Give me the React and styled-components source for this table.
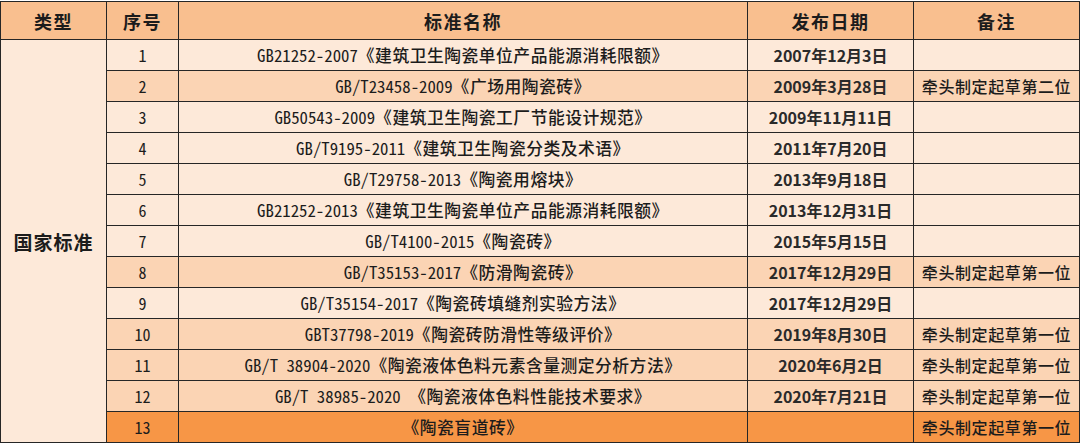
import React from 'react';
import styled, { createGlobalStyle } from 'styled-components';

const GlobalStyle = createGlobalStyle`
  html, body {
    margin: 0;
    padding: 0;
    background: #ffffff;
  }
`;

const tones = {
  header: '#f9bf8f',
  light: '#fde9d9',
  mid: '#fbd4b4',
  strong: '#f79646',
};

const Table = styled.table`
  width: 1079px;
  margin-top: 1px;
  border-collapse: collapse;
  table-layout: fixed;
  font-family: 'Noto Sans CJK SC', sans-serif;
  color: #1c1c1c;
`;

const HeadCell = styled.th`
  height: 37px;
  padding: 0;
  background: ${tones.header};
  border: 1px solid #262626;
  font-size: 18px;
  font-weight: 700;
  letter-spacing: 1.5px;
  text-align: center;
  vertical-align: middle;
`;

const Cell = styled.td`
  height: 30px;
  padding: 0;
  background: ${(p) => tones[p.$tone]};
  border: 1px solid #262626;
  text-align: center;
  vertical-align: middle;
  white-space: nowrap;
  font-size: 16px;
  font-weight: 500;
  letter-spacing: 0;
`;

const DateCell = styled(Cell)`
  font-size: 16px;
  font-weight: 700;
  color: #2a2a2a;
`;

const NoteCell = styled(Cell)`
  font-size: 16px;
  font-weight: 500;
  letter-spacing: 0.6px;
`;

const TypeCell = styled(Cell)`
  font-size: 19px;
  font-weight: 700;
  letter-spacing: 1px;
`;

const Code = styled.span`
  font-family: 'Noto Sans Mono CJK SC', 'Liberation Mono', monospace;
  font-size: 16.8px;
  font-weight: 400;
`;

const Title = styled.span`
  font-family: 'Noto Sans CJK SC', sans-serif;
  font-size: 16.8px;
  font-weight: 500;
  letter-spacing: 0.5px;
`;

const Num = styled.span`
  font-family: 'Noto Sans Mono CJK SC', 'Liberation Mono', monospace;
  font-size: 16px;
  font-weight: 400;
`;

const rows = [
  { code: 'GB21252-2007', title: '《建筑卫生陶瓷单位产品能源消耗限额》', date: '2007年12月3日', note: '', tone: 'light' },
  { code: 'GB/T23458-2009', title: '《广场用陶瓷砖》', date: '2009年3月28日', note: '牵头制定起草第二位', tone: 'mid' },
  { code: 'GB50543-2009', title: '《建筑卫生陶瓷工厂节能设计规范》', date: '2009年11月11日', note: '', tone: 'light' },
  { code: 'GB/T9195-2011', title: '《建筑卫生陶瓷分类及术语》', date: '2011年7月20日', note: '', tone: 'light' },
  { code: 'GB/T29758-2013', title: '《陶瓷用熔块》', date: '2013年9月18日', note: '', tone: 'light' },
  { code: 'GB21252-2013', title: '《建筑卫生陶瓷单位产品能源消耗限额》', date: '2013年12月31日', note: '', tone: 'light' },
  { code: 'GB/T4100-2015', title: '《陶瓷砖》', date: '2015年5月15日', note: '', tone: 'light' },
  { code: 'GB/T35153-2017', title: '《防滑陶瓷砖》', date: '2017年12月29日', note: '牵头制定起草第一位', tone: 'mid' },
  { code: 'GB/T35154-2017', title: '《陶瓷砖填缝剂实验方法》', date: '2017年12月29日', note: '', tone: 'light' },
  { code: 'GBT37798-2019', title: '《陶瓷砖防滑性等级评价》', date: '2019年8月30日', note: '牵头制定起草第一位', tone: 'mid' },
  { code: 'GB/T 38904-2020', title: '《陶瓷液体色料元素含量测定分析方法》', date: '2020年6月2日', note: '牵头制定起草第一位', tone: 'mid' },
  { code: 'GB/T 38985-2020 ', title: '《陶瓷液体色料性能技术要求》', date: '2020年7月21日', note: '牵头制定起草第一位', tone: 'mid' },
  { code: '', title: '《陶瓷盲道砖》', date: '', note: '牵头制定起草第一位', tone: 'strong' },
];

export default function App() {
  return (
    <>
      <GlobalStyle />
      <Table>
        <colgroup>
          <col style={{ width: 106 }} />
          <col style={{ width: 72 }} />
          <col style={{ width: 569 }} />
          <col style={{ width: 166 }} />
          <col style={{ width: 166 }} />
        </colgroup>
        <thead>
          <tr>
            <HeadCell>类型</HeadCell>
            <HeadCell>序号</HeadCell>
            <HeadCell>标准名称</HeadCell>
            <HeadCell>发布日期</HeadCell>
            <HeadCell>备注</HeadCell>
          </tr>
        </thead>
        <tbody>
          {rows.map((r, i) => (
            <tr key={i}>
              {i === 0 && (
                <TypeCell $tone="light" rowSpan={rows.length}>
                  国家标准
                </TypeCell>
              )}
              <Cell $tone={r.tone}>
                <Num>{i + 1}</Num>
              </Cell>
              <Cell $tone={r.tone}>
                <Code>{r.code}</Code>
                <Title>{r.title}</Title>
              </Cell>
              <DateCell $tone={r.tone}>{r.date}</DateCell>
              <NoteCell $tone={r.tone}>{r.note}</NoteCell>
            </tr>
          ))}
        </tbody>
      </Table>
    </>
  );
}
